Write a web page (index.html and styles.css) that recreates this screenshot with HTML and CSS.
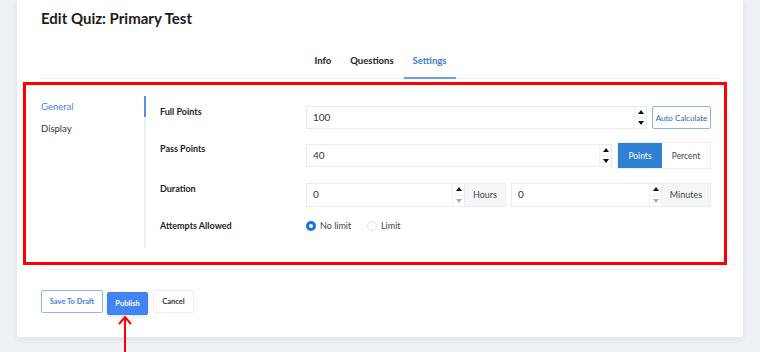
FILE: index.html
```html
<!DOCTYPE html>
<html lang="en">
<head>
  <meta charset="UTF-8" />
  <title>Edit Quiz: Primary Test</title>
  <link rel="stylesheet" href="styles.css">
</head>
<body>
  <div class="card">
    <h1 class="title">Edit Quiz: Primary Test</h1>

    <div class="tabs">
      <a href="#" class="tab">Info</a>
      <a href="#" class="tab">Questions</a>
      <a href="#" class="tab active">Settings</a>
    </div>

    <!-- settings panel, highlighted -->
    <div class="panel">
      <div class="side-nav">
        <a href="#" class="nav-item active">General</a>
        <a href="#" class="nav-item">Display</a>
      </div>
      <div class="divider"><span class="divider-active"></span></div>

      <div class="form">
        <div class="row row-full">
          <div class="label">Full Points</div>
          <div class="controls">
            <div class="num grow">
              <span class="num-value">100</span>
              <span class="spin"><i class="up"></i><i class="down"></i></span>
            </div>
            <button type="button" class="btn-outline">Auto Calculate</button>
          </div>
        </div>

        <div class="row row-pass">
          <div class="label">Pass Points</div>
          <div class="controls">
            <div class="num grow">
              <span class="num-value">40</span>
              <span class="spin"><i class="up"></i><i class="down"></i></span>
            </div>
            <div class="seg">
              <button type="button" class="seg-btn on">Points</button>
              <button type="button" class="seg-btn">Percent</button>
            </div>
          </div>
        </div>

        <div class="row row-duration">
          <div class="label">Duration</div>
          <div class="controls">
            <div class="group">
              <div class="num grow">
                <span class="num-value">0</span>
                <span class="spin"><i class="up"></i><i class="down off"></i></span>
              </div>
              <span class="addon addon-hours">Hours</span>
            </div>
            <div class="group group-min">
              <div class="num grow">
                <span class="num-value">0</span>
                <span class="spin"><i class="up"></i><i class="down off"></i></span>
              </div>
              <span class="addon addon-min">Minutes</span>
            </div>
          </div>
        </div>

        <div class="row row-attempts">
          <div class="label">Attempts Allowed</div>
          <div class="controls radios">
            <label class="radio"><span class="dot checked"></span>No limit</label>
            <label class="radio"><span class="dot"></span>Limit</label>
          </div>
        </div>
      </div>
    </div>

    <div class="footer-line"></div>

    <div class="actions">
      <button type="button" class="btn btn-draft">Save To Draft</button>
      <div class="publish-wrap">
        <button type="button" class="btn btn-publish">Publish</button>
        <svg class="arrow" width="16" height="40" viewBox="0 0 16 40">
          <path d="M8 3 V40" stroke="#f00" stroke-width="2" fill="none"/>
          <path d="M2 10 L8 3 L14 10" stroke="#f00" stroke-width="2" fill="none"/>
        </svg>
      </div>
      <button type="button" class="btn btn-cancel">Cancel</button>
    </div>
  </div>
</body>
</html>
```

FILE: styles.css
```css
* { margin: 0; padding: 0; box-sizing: border-box; }
body {
  font-family: Lato, "Open Sans", Arial, sans-serif;
  background: #eef1f5;
  height: 352px;
  overflow: hidden;
  color: #222;
}
.card {
  margin-left: 17px;
  width: 726px;
  height: 337px;
  background: #fff;
  box-shadow: 0 2px 8px rgba(40, 60, 90, 0.08);
  padding: 9px 23px 0 24px;
}
.title {
  font-size: 15px;
  font-weight: 700;
  line-height: 18px;
  color: #1c1c1c;
}
.tabs {
  display: flex;
  justify-content: center;
  margin-top: 24px;
  border-bottom: 1px solid #eef0f3;
}
.tab {
  font-size: 9.5px;
  font-weight: 700;
  color: #222;
  text-decoration: none;
  padding: 3px 9px 9px;
  line-height: 14px;
  border-bottom: 2px solid transparent;
  margin-bottom: -1px;
}
.tab + .tab { margin-left: 1px; }
.tab.active {
  color: #3d7be0;
  border-bottom-color: #6d9be8;
}

.panel {
  display: flex;
  border: 3px solid #f00;
  margin: 3px -7px 0 -18px;
  padding: 11px 13px 14px 15px;
}
.side-nav {
  width: 103px;
  display: flex;
  flex-direction: column;
  gap: 10px;
}
.nav-item {
  font-size: 9.5px;
  color: #333;
  text-decoration: none;
  line-height: 12px;
  padding-top: 5px;
}
.nav-item.active { color: #4a7fe6; }
.nav-item + .nav-item { padding-top: 0; }
.divider {
  width: 2px;
  background: #eceef2;
}
.divider-active {
  display: block;
  height: 21px;
  background: #5b8fe6;
}

.form {
  flex: 1;
  padding: 10px 0 16px 14px;
  display: flex;
  flex-direction: column;
  gap: 13px;
}
.row {
  display: flex;
  align-items: flex-start;
}
.label {
  width: 146px;
  font-size: 9px;
  font-weight: 700;
  color: #222;
  line-height: 12px;
}
.row-pass .label { padding-top: 1px; }
.row-duration { margin-top: 1px; }
.controls {
  flex: 1;
  display: flex;
  align-items: center;
  gap: 5px;
}
.num {
  display: flex;
  align-items: stretch;
  height: 23px;
  border: 1px solid #e8ebef;
  background: #fff;
}
.grow { flex: 1; }
.num-value {
  flex: 1;
  font-size: 10px;
  color: #333;
  padding-left: 6px;
  line-height: 21px;
}
.spin {
  width: 12px;
  display: flex;
  flex-direction: column;
  border-left: 1px solid #f0f1f4;
}
.spin i {
  flex: 1;
  display: flex;
  align-items: center;
  justify-content: center;
}
.spin i::before {
  content: "";
  border-left: 3.5px solid transparent;
  border-right: 3.5px solid transparent;
}
.spin .up::before { border-bottom: 4px solid #111; }
.spin .down::before { border-top: 4px solid #111; }
.spin .down.off::before { border-top-color: #aaa; }
.spin .down { border-top: 1px solid #f0f1f4; }

.btn-outline {
  font-family: inherit;
  width: 59px;
  height: 23px;
  font-size: 8px;
  color: #2f62b0;
  background: #fff;
  border: 1px solid #8fb0e3;
  border-radius: 2px;
}
.seg {
  display: flex;
  height: 27px;
  border: 1px solid #eceef2;
}
.seg-btn {
  font-family: inherit;
  font-size: 8.5px;
  background: #fff;
  color: #444;
  border: none;
  width: 48px;
}
.seg-btn.on {
  width: 44px;
  background: #2f7fd3;
  color: #fff;
}

.group {
  display: flex;
  height: 24px;
  width: 200px;
}
.group .num { height: 24px; }
.group-min { flex: 1; width: auto; }
.addon {
  background: #f5f6f8;
  border: 1px solid #eceef2;
  border-left: none;
  font-size: 9px;
  color: #444;
  line-height: 22px;
  text-align: center;
}
.addon-hours { width: 41px; }
.addon-min { width: 49px; }

.radios {
  gap: 0;
  height: 12px;
}
.radio {
  display: flex;
  align-items: center;
  font-size: 9px;
  color: #444;
  width: 61px;
  line-height: 12px;
}
.dot {
  width: 10px;
  height: 10px;
  border-radius: 50%;
  border: 1px solid #dfe2e7;
  margin-right: 4px;
}
.dot.checked {
  border: 3px solid #1f6fe5;
}

.footer-line {
  height: 1px;
  background: #f2f3f5;
  margin-top: 4px;
}
.actions {
  display: flex;
  gap: 4px;
  margin-top: 20px;
}
.btn {
  font-family: inherit;
  height: 23px;
  font-size: 7.5px;
  font-weight: 700;
  border-radius: 2px;
  background: #fff;
  cursor: pointer;
}
.btn-draft {
  width: 62px;
  color: #4a80e8;
  border: 1px solid #8fb2f3;
}
.btn-publish {
  width: 41px;
  color: #fff;
  background: #4384f5;
  border: 1px solid #3f7bea;
  box-shadow: 0 2px 5px rgba(40, 80, 150, 0.15);
}
.btn-cancel {
  width: 41px;
  color: #333;
  border: 1px solid #eceef1;
  margin-left: 1px;
}
.publish-wrap { position: relative; }
.arrow {
  position: absolute;
  left: 10px;
  top: 24px;
}
```
